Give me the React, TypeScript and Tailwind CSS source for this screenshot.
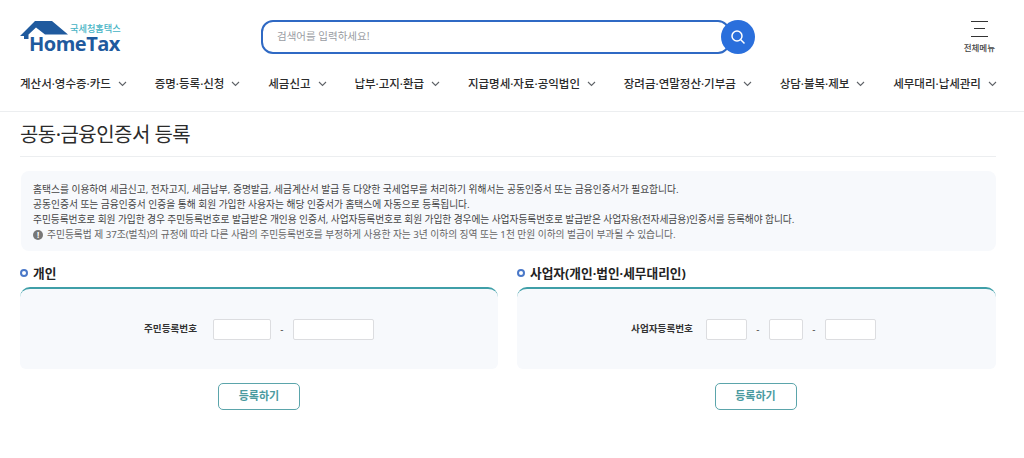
import React from "react";

const navItems = [
  "계산서·영수증·카드",
  "증명·등록·신청",
  "세금신고",
  "납부·고지·환급",
  "지급명세·자료·공익법인",
  "장려금·연말정산·기부금",
  "상담·불복·제보",
  "세무대리·납세관리",
];

function Chevron() {
  return (
    <svg width="9" height="6" viewBox="0 0 9 6" fill="none" className="shrink-0">
      <path d="M1 1l3.5 3.5L8 1" stroke="#5f6368" strokeWidth="1.1" />
    </svg>
  );
}

function Logo() {
  return (
    <div className="relative w-[102px] h-[32px]">
      <svg width="50" height="18" viewBox="0 0 50 18" className="absolute left-0 top-0">
        <path d="M0 15 L15 0 H32 L48 13.5 H25 L16 6.5 L8.5 13.5 V18 H4 V15 Z" fill="#1f5a9e" />
      </svg>
      <span className="absolute left-[50px] top-[2px] text-[9.2px] leading-[11px] text-[#45b3c4] font-medium whitespace-nowrap">국세청홈택스</span>
      <span className="absolute left-[9px] top-[15px] text-[20px] leading-[16px] font-bold text-[#1f5a9e] font-['Open_Sans','Liberation_Sans',sans-serif] tracking-[-0.5px] whitespace-nowrap">HomeTax</span>
    </div>
  );
}

function Panel({ title, label, widths, labelGap, shift, btnShift, className }: { title: string; label: string; widths: string[]; labelGap: string; shift: string; btnShift: string; className: string }) {
  return (
    <section className={className}>
      <h2 className="flex items-center gap-[5px] h-[18px] text-[12.7px] font-bold text-[#222] leading-[18px]">
        <span className="w-[8px] h-[8px] rounded-full border-2 border-[#4a78c8] shrink-0" />
        {title}
      </h2>
      <div className="mt-[5px] h-[82px] rounded-t-[10px] rounded-b-[6px] border-t-2 border-[#3f9fa8] bg-[#f7f9fc] flex items-center justify-center">
        <div className={`flex items-center ${shift}`}>
          <span className={`text-[9.6px] font-semibold text-[#333] ${labelGap}`}>{label}</span>
          {widths.map((w, i) => (
            <React.Fragment key={i}>
              {i > 0 && <span className="w-[22px] text-[10px] text-[#555] text-center">-</span>}
              <span className={`h-[21px] bg-white border border-[#dcdde0] rounded-[2px] ${w}`} />
            </React.Fragment>
          ))}
        </div>
      </div>
      <div className={`mt-[14px] flex justify-center ${btnShift}`}>
        <button className="w-[82px] h-[27px] rounded-[5px] border border-[#5ba5ab] bg-white text-[11px] font-semibold text-[#4a9a9f]">
          등록하기
        </button>
      </div>
    </section>
  );
}

export default function App() {
  return (
    <div className="w-[1024px] h-[458px] bg-white overflow-hidden font-['Noto_Sans','Noto_Sans_CJK_KR',sans-serif]">
      <header className="h-[112px] border-b border-[#eceef0]">
        <div className="h-[73px] flex items-center pl-[20px] pr-[29px]">
          <Logo />
          <div className="ml-[139px] flex items-center">
            <div className="w-[469px] h-[34px] rounded-[12px] border-2 border-[#2f69c4] bg-white flex items-center pl-[14px] text-[10.5px] text-[#9a9da3]">
              검색어를 입력하세요!
            </div>
            <div className="-ml-[9px] w-[34px] h-[34px] rounded-full bg-[#2a6fdc] flex items-center justify-center z-10">
              <svg width="16" height="16" viewBox="0 0 16 16" fill="none">
                <circle cx="7" cy="7" r="5" stroke="white" strokeWidth="1.5" />
                <path d="M10.8 10.8L14.5 14.5" stroke="white" strokeWidth="1.5" />
              </svg>
            </div>
          </div>
          <div className="ml-auto flex flex-col items-center mt-[2px]">
            <svg width="17" height="16" viewBox="0 0 17 16" fill="none">
              <path d="M0 0.5h17M3 7.5h11M0 15.5h17" stroke="#333" strokeWidth="1.2" />
            </svg>
            <span className="mt-[5px] text-[8.5px] leading-[12px] font-medium text-[#444]">전체메뉴</span>
          </div>
        </div>
        <nav className="flex justify-between pl-[20px] pr-[27px] h-[22px] items-center">
          {navItems.map((n) => (
            <span key={n} className="flex items-center gap-[7px] text-[11.5px] font-medium text-[#2b2b2b] whitespace-nowrap">
              {n}
              <Chevron />
            </span>
          ))}
        </nav>
      </header>
      <main className="px-[20px]">
        <h1 className="mt-[9px] h-[36px] text-[20px] leading-[28px] font-normal tracking-[-0.55px] text-[#2b2b2b] border-b border-[#eceef0] mr-[8px]">
          공동·금융인증서 등록
        </h1>
        <div className="mt-[14px] ml-[1px] mr-[8px] h-[80px] rounded-[8px] bg-[#f7f9fc] pl-[12px] pt-[11px] text-[9.75px] leading-[15px] text-[#444]">
          <p>홈택스를 이용하여 세금신고, 전자고지, 세금납부, 증명발급, 세금계산서 발급 등 다양한 국세업무를 처리하기 위해서는 공동인증서 또는 금융인증서가 필요합니다.</p>
          <p>공동인증서 또는 금융인증서 인증을 통해 회원 가입한 사용자는 해당 인증서가 홈택스에 자동으로 등록됩니다.</p>
          <p className="tracking-[-0.08px]">주민등록번호로 회원 가입한 경우 주민등록번호로 발급받은 개인용 인증서, 사업자등록번호로 회원 가입한 경우에는 사업자등록번호로 발급받은 사업자용(전자세금용)인증서를 등록해야 합니다.</p>
          <p className="flex items-center gap-[4px] text-[#666] tracking-[-0.03px]">
            <span className="w-[10px] h-[10px] rounded-full bg-[#777] text-white text-[8px] leading-[10px] text-center font-bold">!</span>
            주민등록법 제 37조(벌칙)의 규정에 따라 다른 사람의 주민등록번호를 부정하게 사용한 자는 3년 이하의 징역 또는 1천 만원 이하의 벌금이 부과될 수 있습니다.
          </p>
        </div>
        <div className="mt-[13px] flex gap-[19px] mr-[8px]">
          <Panel className="w-[478px] shrink-0" title="개인" label="주민등록번호" widths={["w-[58px]", "w-[81px]"]} labelGap="mr-[16px]" shift="" btnShift="" />
          <Panel className="flex-1 min-w-0" title="사업자(개인·법인·세무대리인)" label="사업자등록번호" widths={["w-[41px]", "w-[34px]", "w-[51px]"]} labelGap="mr-[13px]" shift="-translate-x-[3px]" btnShift="-translate-x-[1px]" />
        </div>
      </main>
    </div>
  );
}
